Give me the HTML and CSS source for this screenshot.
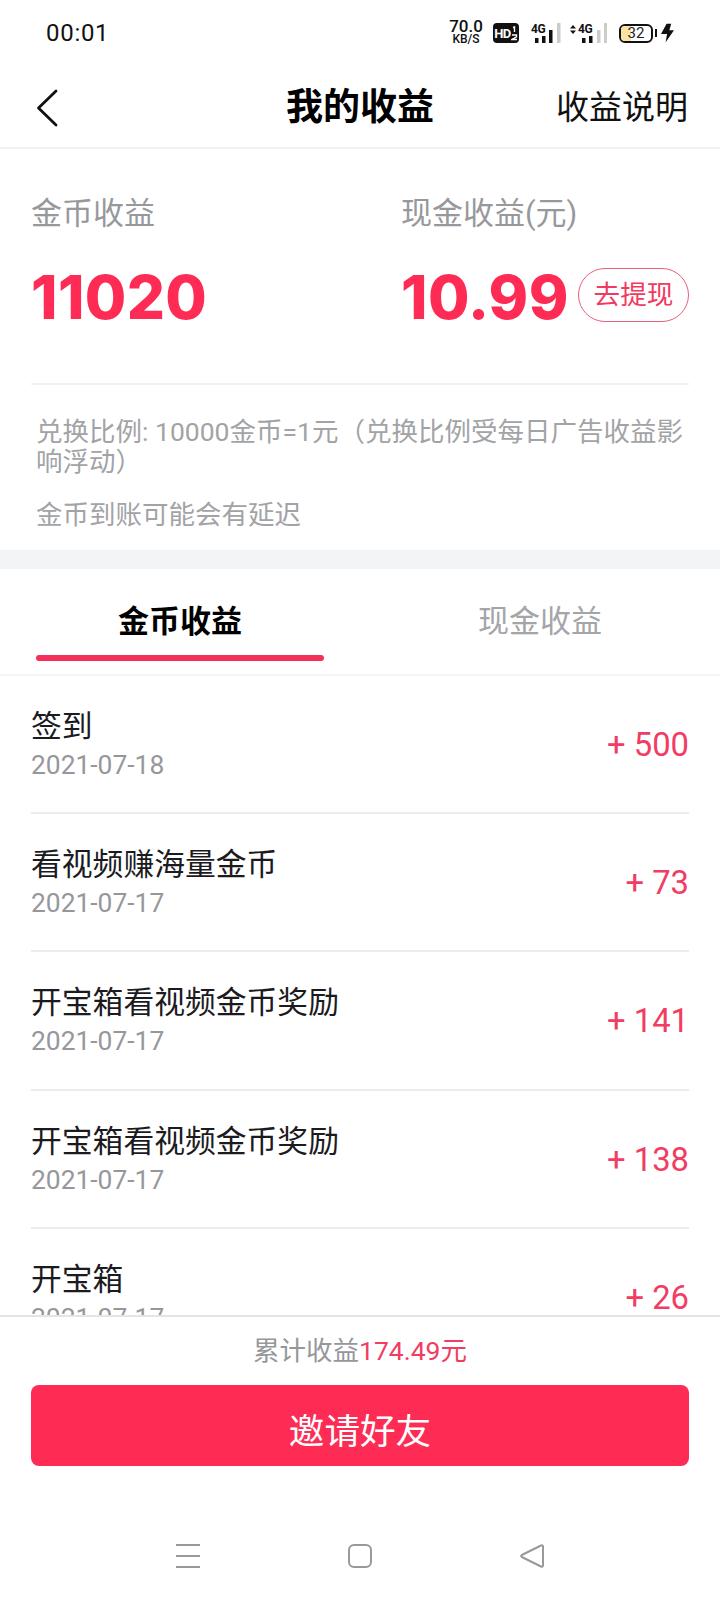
FILE: index.html
```html
<!DOCTYPE html>
<html lang="zh-CN">
<head>
<meta charset="utf-8">
<title>我的收益</title>
<link rel="stylesheet" href="styles.css">
</head>
<body>
<div class="page">
  <div class="status">
    <span class="clock">00:01</span>
    <div class="status-icons">
      <div class="speed"><span class="speed-num">70.0</span><span class="speed-unit">KB/S</span></div>
      <div class="hd"><span>HD</span><svg width="7" height="15" viewBox="0 0 7 15"><path d="M2 1.5 3.5 1v5M1 9h4.500v1.800L1 13.500h5" fill="none" stroke="#fff" stroke-width="1.400"/></svg></div>
      <div class="sig"><span class="sig-t">4G</span>
        <svg width="30" height="20" viewBox="0 0 30 20"><rect x="4" y="15" width="3.500" height="5" fill="#111"/><rect x="11" y="13" width="3.500" height="7" fill="#111"/><rect x="18" y="7" width="3.500" height="13" fill="#111"/><rect x="26" y="0" width="3.500" height="20" fill="#ccc"/></svg></div>
      <div class="sig sig2">
        <svg class="arrows" width="6" height="9" viewBox="0 0 6 9"><path d="M3 0 6 3.500H0zM3 9 0 5.500h6z" fill="#111"/></svg>
        <span class="sig-t">4G</span>
        <svg class="bars" width="37" height="20" viewBox="0 0 37 20"><rect x="12" y="15" width="3.500" height="5" fill="#111"/><rect x="19" y="13" width="3.500" height="7" fill="#111"/><rect x="27" y="7" width="3.500" height="13" fill="#ccc"/><rect x="34" y="0" width="3" height="20" fill="#ccc"/></svg></div>
      <div class="batt"><div class="batt-body"><div class="batt-fill"></div><span class="batt-n">32</span></div><div class="batt-tip"></div></div>
      <svg class="bolt" width="13" height="20" viewBox="0 0 14 20"><path d="M6 0h5L9 7h5L5 20l1.500-9H0z" fill="#111"/></svg>
    </div>
  </div>

  <header class="topbar">
    <svg class="back" width="24" height="38" viewBox="0 0 24 38"><path d="M21 2 3.500 19 21 36" fill="none" stroke="#111" stroke-width="2.800" stroke-linecap="round" stroke-linejoin="round"/></svg>
    <h1 class="title">我的收益</h1>
    <a class="explain">收益说明</a>
  </header>

  <section class="summary">
    <div class="stats">
      <div class="stat stat-coin">
        <div class="stat-label">金币收益</div>
        <div class="stat-value">11020</div>
      </div>
      <div class="stat stat-cash">
        <div class="stat-label">现金收益(元)</div>
        <div class="stat-line"><span class="stat-value">10.99</span><a class="withdraw">去提现</a></div>
      </div>
    </div>
    <div class="notes">
      <p class="note-a">兑换比例: 10000金币=1元（兑换比例受每日广告收益影响浮动）</p>
      <p class="note-b">金币到账可能会有延迟</p>
    </div>
  </section>

  <div class="band"></div>

  <nav class="tabs">
    <div class="tab tab-on"><span>金币收益</span><i class="tab-bar"></i></div>
    <div class="tab"><span>现金收益</span></div>
  </nav>

  <div class="list">
    <div class="row"><div class="row-main"><div class="row-title">签到</div><div class="row-date">2021-07-18</div></div><div class="row-amt">+ 500</div></div>
    <div class="row"><div class="row-main"><div class="row-title">看视频赚海量金币</div><div class="row-date">2021-07-17</div></div><div class="row-amt">+ 73</div></div>
    <div class="row"><div class="row-main"><div class="row-title">开宝箱看视频金币奖励</div><div class="row-date">2021-07-17</div></div><div class="row-amt">+ 141</div></div>
    <div class="row"><div class="row-main"><div class="row-title">开宝箱看视频金币奖励</div><div class="row-date">2021-07-17</div></div><div class="row-amt">+ 138</div></div>
    <div class="row"><div class="row-main"><div class="row-title">开宝箱</div><div class="row-date">2021-07-17</div></div><div class="row-amt">+ 26</div></div>
  </div>

  <footer class="foot">
    <div class="total">累计收益<em>174.49元</em></div>
    <a class="invite">邀请好友</a>
  </footer>

  <div class="navbar">
    <svg width="24" height="24" viewBox="0 0 24 24"><path d="M0 1h24M0 12h24M0 23h24" stroke="#999" stroke-width="2"/></svg>
    <svg width="24" height="24" viewBox="0 0 24 24"><rect x="1" y="1" width="22" height="22" rx="5" fill="none" stroke="#999" stroke-width="2"/></svg>
    <svg width="24" height="24" viewBox="0 0 24 24"><path d="M23 2.500c0-1.200-1-1.700-2-1L1.800 11c-.9.500-.9 1.500 0 2L21 22.500c1 .7 2 .2 2-1z" fill="none" stroke="#999" stroke-width="2" stroke-linejoin="round"/></svg>
  </div>
</div>
</body>
</html>
```

FILE: styles.css
```css
* { box-sizing: border-box; }
html, body { margin: 0; padding: 0; background: #fff; }
body { font-family: Roboto, "Noto Sans CJK SC", sans-serif; color: #1b1b1f; }
p, h1 { margin: 0; }
em { font-style: normal; }

.page { width: 720px; height: 1600px; display: flex; flex-direction: column; overflow: hidden; }

/* status bar */
.status { height: 66px; flex: none; display: flex; align-items: center; justify-content: space-between; padding: 0 46px; color: #111; }
.clock { font-size: 24px; letter-spacing: .7px; }
.status-icons { display: flex; align-items: center; }
.speed { display: flex; flex-direction: column; align-items: center; width: 32px; margin-right: 11px; margin-top: -3px; color: #111; }
.speed-num { font-size: 17px; line-height: 15px; font-weight: 500; }
.speed-unit { font-size: 12px; line-height: 11px; font-weight: 500; }
.hd { width: 26px; height: 20px; border-radius: 4px; background: #111; color: #fff; display: flex; align-items: center; justify-content: center; margin-right: 12px; font-size: 13px; font-weight: 700; letter-spacing: -.5px; }
.sig { position: relative; width: 30px; height: 20px; margin-right: 9px; }
.sig svg { position: absolute; left: 0; bottom: 0; }
.sig-t { position: absolute; left: 0; top: 0; font-size: 12px; line-height: 12px; font-weight: 700; letter-spacing: -.5px; color: #111; }
.sig2 { width: 37px; margin-right: 12px; }
.sig2 .sig-t { left: 8px; }
.sig .arrows { left: 0; bottom: auto; top: 2px; }
.batt { display: flex; align-items: center; margin-right: 4px; }
.batt-body { position: relative; width: 34px; height: 19px; border: 2px solid #111; border-radius: 6px; overflow: hidden; display: flex; align-items: center; justify-content: center; }
.batt-fill { position: absolute; left: 0; top: 0; bottom: 0; width: 34%; background: #fbe3a6; }
.batt-n { position: relative; font-size: 15px; line-height: 15px; color: #222; }
.batt-tip { width: 2px; height: 8px; background: #111; margin-left: 2px; }
.bolt { display: block; }

/* top bar */
.topbar { position: relative; flex: none; height: 83px; display: flex; align-items: center; justify-content: space-between; padding: 0 32px 0 35px; border-bottom: 2px solid #f1f1f2; }
.back { display: block; margin-top: 3px; }
.title { position: absolute; left: 0; right: 0; top: 17px; text-align: center; font-size: 37px; line-height: 50px; font-weight: 700; color: #000; pointer-events: none; }
.explain { font-size: 33px; line-height: 44px; color: #111; margin-top: 3px; }

/* summary */
.summary { flex: none; height: 401px; padding: 0 31px; display: flex; flex-direction: column; }
.stats { display: flex; height: 236px; border-bottom: 2px solid #f1f1f2; padding-top: 44px; }
.stat-coin { width: 370px; }
.stat-cash { flex: 1; }
.stat-label { font-size: 31px; line-height: 42px; color: #97989c; }
.stat-value { font-family: Inter, Roboto, sans-serif; font-size: 60px; line-height: 72px; font-weight: 800; color: #fe2c55; letter-spacing: .4px; margin-top: 26px; display: block; }
.stat-line { display: flex; align-items: center; justify-content: space-between; margin-top: 26px; }
.stat-line .stat-value { margin-top: 0; }
.withdraw { width: 111px; height: 54px; margin-top: -4px; border: 1px solid #e4607c; border-radius: 27px; color: #f03a60; font-size: 26.6px; line-height: 52px; text-align: center; }
.notes { padding: 32px 0 0 5px; color: #a2a3a6; font-size: 26.5px; }
.note-a { line-height: 30px; }
.note-b { line-height: 36px; margin-top: 20px; }

.band { flex: none; height: 19px; background: #f3f4f6; }

/* tabs */
.tabs { flex: none; height: 107px; display: flex; border-bottom: 2px solid #f5f5f6; }
.tab { position: relative; width: 360px; text-align: center; padding-top: 32px; font-size: 31px; line-height: 42px; color: #a4a5a8; }
.tab-on { color: #000; font-weight: 700; }
.tab-bar { position: absolute; left: 36px; right: 36px; top: 86px; height: 6px; border-radius: 3px; background: #f42f59; }

/* list */
.list { flex: 1; min-height: 0; overflow: hidden; padding: 0 31px; }
.row { height: 138.2px; display: flex; align-items: center; justify-content: space-between; border-bottom: 2px solid #ececee; }
.row-main { min-width: 0; padding-top: 1px; }
.row-title { font-size: 30.8px; line-height: 42px; color: #1b1b1f; }
.row-date { font-size: 26.4px; line-height: 36px; color: #96979b; margin-top: -1px; }
.row-amt { font-size: 32.8px; color: #f13d63; margin-top: 2px; }

/* footer */
.foot { flex: none; height: 180px; padding: 0 31px; border-top: 2px solid #e4e4e6; }
.total { text-align: center; font-size: 26.5px; line-height: 36px; color: #96979b; padding-top: 16px; }
.total em { color: #f13d63; }
.invite { display: block; margin-top: 16px; height: 81px; border-radius: 8px; background: #fe2c55; color: #fff; font-size: 35.6px; line-height: 94px; text-align: center; }

/* nav bar */
.navbar { flex: none; height: 105px; display: flex; justify-content: center; gap: 148px; padding-top: 49px; }
.navbar svg { display: block; }
```
